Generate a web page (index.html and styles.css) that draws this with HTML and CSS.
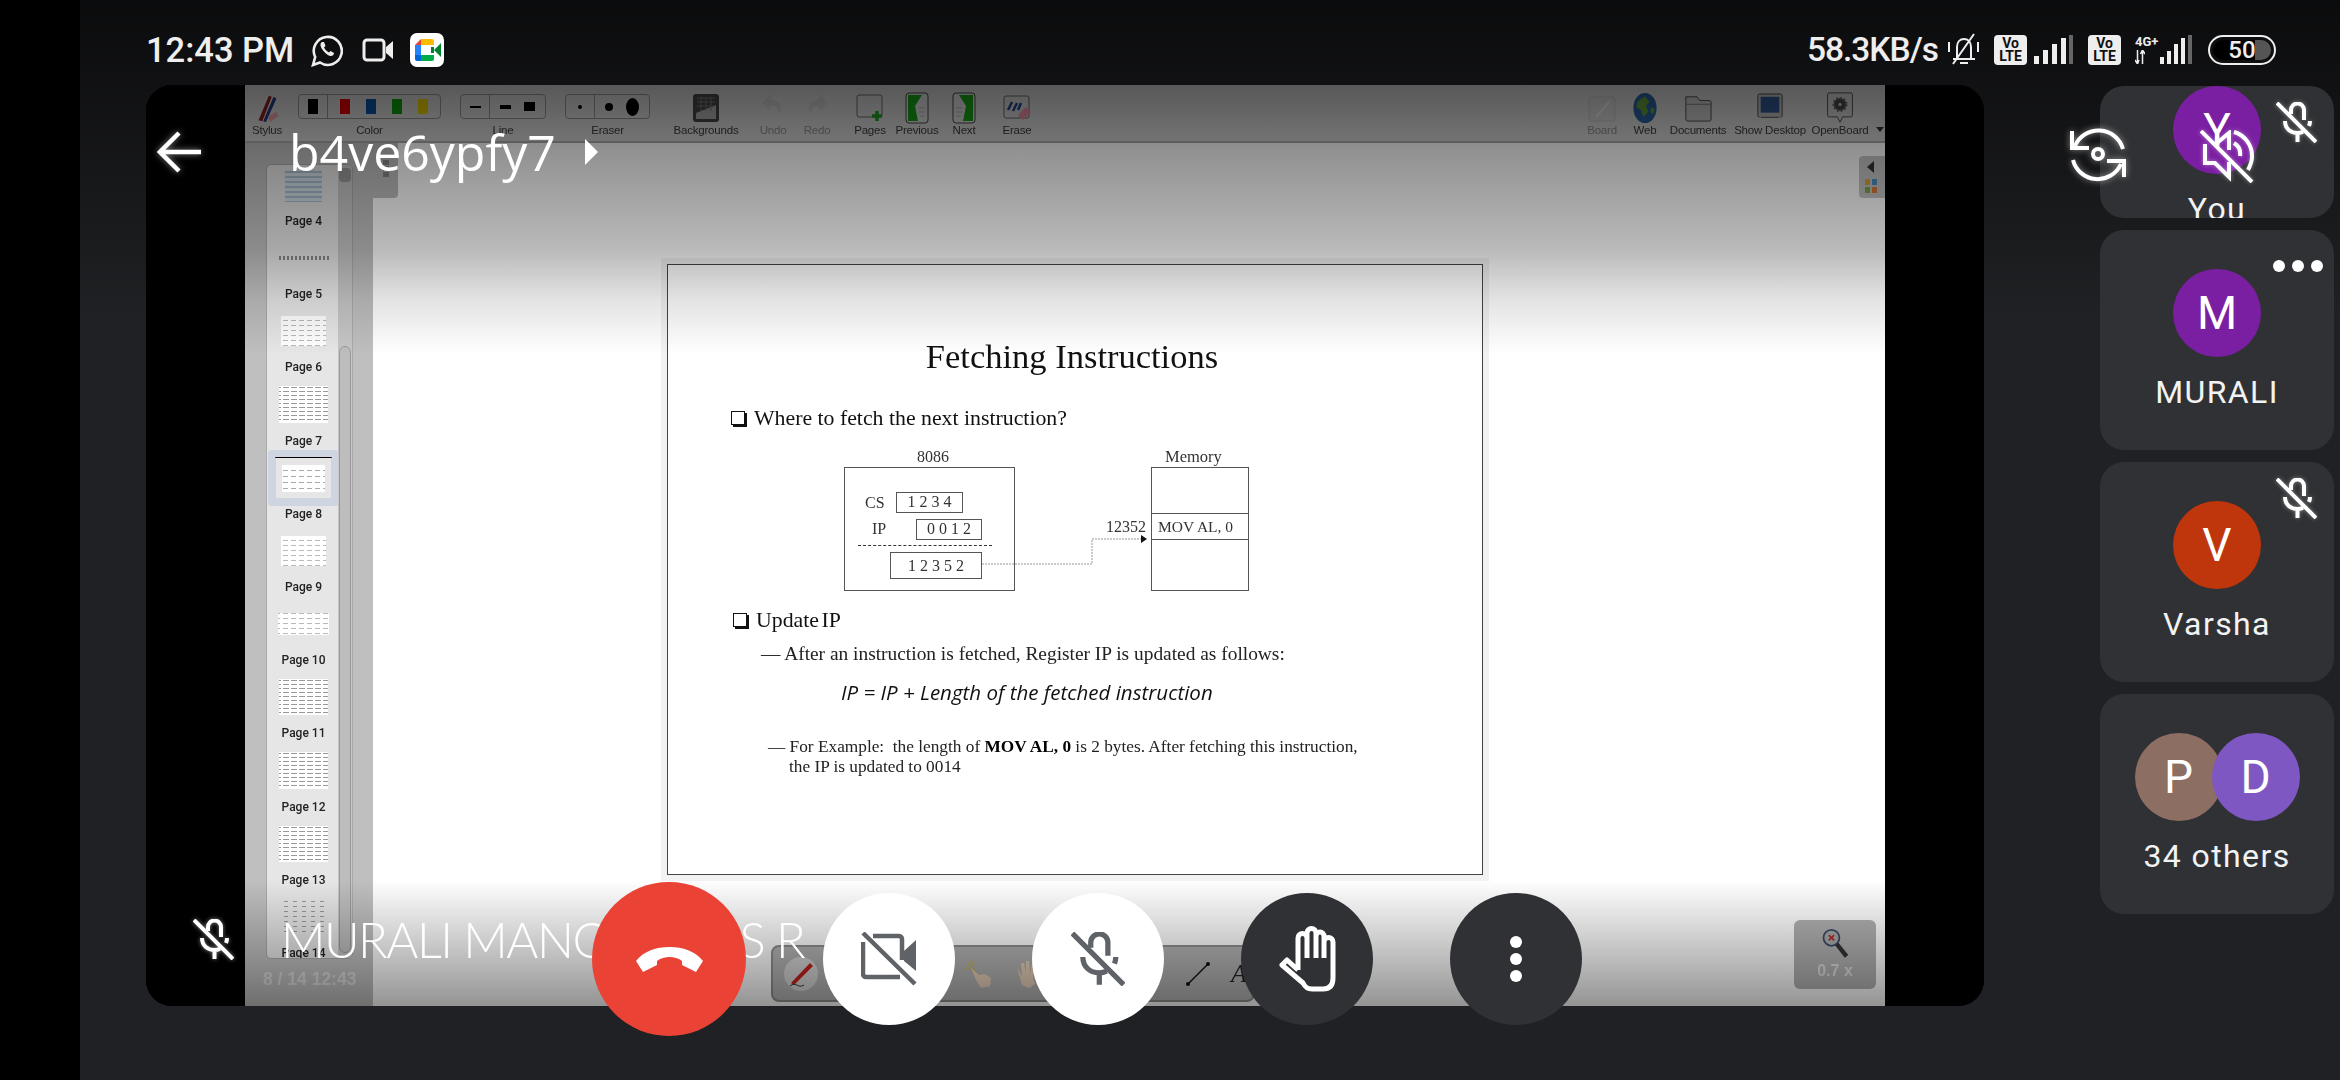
FILE: index.html
```html
<!DOCTYPE html>
<html lang="en">
<head>
    <meta charset="UTF-8">
    <title>Meet call</title>
    <link rel="stylesheet" href="styles.css">
</head>
<body>

<svg class="defs" width="0" height="0">
    <symbol id="mic-off" viewBox="0 0 41 41">
        <path d="M1 1L40 40M15 12V8a6.5 6.5 0 0 1 13 0V18M9 19c0 8 6 12 12.500 12c2 0 4-.5 5.500-1.300M34 19c0 2-.4 3.500-1 5M21.500 31V40" fill="none" stroke="currentColor" stroke-width="4"/>
    </symbol>
</svg>

<div class="screen">
    <div class="bezel"></div>

    <div class="app">
        <div class="statusbar">
            <span class="clock">12:43 PM</span>
            <svg class="st-whatsapp" viewBox="0 0 32 34"><path d="M2 32l2.200-8A14 14 0 1 1 9 29.500z" fill="none" stroke="#eee" stroke-width="2.600"/><path d="M11 9c-2 1-2 4 0 7s5 6 8 7c2 .5 4-1 4-3l-3.500-2-1.500 1.500c-2-1-4-3-5-5l1.500-1.500L13 9z" fill="#eee"/></svg>
            <svg class="st-camera" viewBox="0 0 31 24"><path d="M5 2H19a3 3 0 0 1 3 3V19a3 3 0 0 1-3 3H5a3 3 0 0 1-3-3V5a3 3 0 0 1 3-3z" fill="none" stroke="#eee" stroke-width="3"/><path d="M24 9l7-6V21l-7-6z" fill="#eee"/></svg>
            <svg class="st-meet" viewBox="0 0 34 34">
                <rect width="34" height="34" rx="7" fill="#fff"/>
                <path d="M5 12L11 6V12z" fill="#ea4335"/>
                <path d="M11 6H22a2 2 0 0 1 2 2V12H11z" fill="#fbbc04"/>
                <path d="M5 12H11V22H5z" fill="#2684fc"/>
                <path d="M5 22H11V28H7a2 2 0 0 1-2-2z" fill="#0066da"/>
                <path d="M11 22H24V26a2 2 0 0 1-2 2H11z" fill="#00ac47"/>
                <path d="M24 17L31 10V24zM21 14H24V20H21z" fill="#00832d"/>
            </svg>

            <span class="net-speed">58.3KB/s</span>
            <svg class="st-bell" viewBox="0 0 33 33"><path d="M10 26V14c0-5 3-8 7-8s7 3 7 8V26M6 26H28M13 30H21M27 1L6 31M2 9V19M31 9V19" fill="none" stroke="#eee" stroke-width="2"/></svg>
            <span class="volte"><span>Vo</span><span>LTE</span></span>
            <svg class="st-signal" viewBox="0 0 39 29"><path d="M0 21H5V29H0zM9 15H14V29H9zM18 9H23V29H18zM27 3H32V29H27z" fill="#eee"/><path d="M35 0H39V29H35z" fill="#666"/></svg>
            <span class="volte volte-two"><span>Vo</span><span>LTE</span></span>
            <span class="net-type">
                <span class="net-4g">4G+</span>
                <svg class="st-arrows" viewBox="0 0 10 14"><path d="M2.500 0V13M0 10L2.500 14L4 10M7.500 14V1M5.500 4L7.500 0L10 4" fill="none" stroke="#eee" stroke-width="1.500"/></svg>
            </span>
            <svg class="st-signal-two" viewBox="0 0 32 29"><path d="M0 22H4V29H0zM7 16H11V29H7zM14 9H18V29H14zM21 3H25V29H21z" fill="#eee"/><path d="M28 0H32V29H28z" fill="#666"/></svg>
            <span class="battery"><span class="battery-level"></span><span class="battery-num">50</span></span>
        </div>

        <div class="main">
            <div class="stage">
                <div class="pillar"></div>

                <div class="slide">
                    <div class="toolbar">
                        <div class="tool tool-stylus">
                            <svg class="tool-ico" viewBox="0 0 26 34"><path d="M4 30L15 4l3 1L8 31z" fill="#8c1c1c"/><path d="M9 31L20 5l3 2L12 32z" fill="#1c3a80"/><path d="M14 26l9-5 2 5-9 6z" fill="#e49aa8"/></svg>
                            <span class="tool-label">Stylus</span>
                        </div>
                        <div class="tool tool-color">
                            <div class="swatches">
                                <span class="cell cell-first"><i class="sw sw-black"></i></span>
                                <span class="cell"><i class="sw sw-red"></i><i class="sw sw-blue"></i><i class="sw sw-green"></i><i class="sw sw-yellow"></i></span>
                            </div>
                            <span class="tool-label">Color</span>
                        </div>
                        <div class="tool tool-line">
                            <div class="swatches">
                                <span class="cell cell-first"><i class="ln ln-1"></i></span>
                                <span class="cell"><i class="ln ln-2"></i><i class="ln ln-3"></i></span>
                            </div>
                            <span class="tool-label">Line</span>
                        </div>
                        <div class="tool tool-eraser">
                            <div class="swatches">
                                <span class="cell cell-first"><i class="dot dot-1"></i></span>
                                <span class="cell"><i class="dot dot-2"></i><i class="dot dot-3"></i></span>
                            </div>
                            <span class="tool-label">Eraser</span>
                        </div>
                        <div class="tool tool-bg">
                            <svg class="tool-ico" viewBox="0 0 28 30"><rect x="1" y="1" width="26" height="28" rx="3" fill="#444"/><path d="M4 20L24 12V26H4z" fill="#aaa"/><path d="M5 5H23M5 9H23M5 13H23M9 4V18M14 4V18M19 4V18" stroke="#777"/></svg>
                            <span class="tool-label">Backgrounds</span>
                        </div>
                        <div class="tool tool-undo tool-off">
                            <svg class="tool-ico" viewBox="0 0 24 30"><path d="M10 2L2 10l8 8v-5c5 0 8 3 7 9 5-7 3-14-7-15z" fill="#bbb"/></svg>
                            <span class="tool-label">Undo</span>
                        </div>
                        <div class="tool tool-redo tool-off">
                            <svg class="tool-ico" viewBox="0 0 24 30"><path d="M14 2l8 8-8 8v-5c-5 0-8 3-7 9C2 15 4 8 14 7z" fill="#bbb"/></svg>
                            <span class="tool-label">Redo</span>
                        </div>
                        <div class="tool tool-pages">
                            <svg class="tool-ico" viewBox="0 0 28 32"><rect x="1" y="3" width="25" height="22" rx="2" fill="#d0d0d0" stroke="#666"/><path d="M21 19v10M16 24h10" stroke="#1f9a1f" stroke-width="3.500"/></svg>
                            <span class="tool-label">Pages</span>
                        </div>
                        <div class="tool tool-prev">
                            <svg class="tool-ico" viewBox="0 0 24 32"><rect x="1" y="1" width="22" height="30" rx="3" fill="#d8d8d8" stroke="#444"/><path d="M3 3H17L10 14l3 15H3z" fill="#17a017"/><path d="M14 16H20M14 20H20M15 24H20" stroke="#aaa"/></svg>
                            <span class="tool-label">Previous</span>
                        </div>
                        <div class="tool tool-next">
                            <svg class="tool-ico" viewBox="0 0 24 32"><rect x="1" y="1" width="22" height="30" rx="3" fill="#d8d8d8" stroke="#444"/><path d="M21 3H7L14 14l-3 15h10z" fill="#17a017"/><path d="M4 16H10M4 20H10M4 24H9" stroke="#aaa"/></svg>
                            <span class="tool-label">Next</span>
                        </div>
                        <div class="tool tool-erase">
                            <svg class="tool-ico" viewBox="0 0 28 30"><rect x="1" y="3" width="25" height="22" rx="2" fill="#d0d0d0" stroke="#666"/><path d="M5 17L9 9M10 18L14 10M15 17L18 10" stroke="#27408b" stroke-width="2.500"/><path d="M15 22l8-8 5 5-8 8z" fill="#e88aa0"/></svg>
                            <span class="tool-label">Erase</span>
                        </div>

                        <div class="tool tool-board tool-off">
                            <svg class="tool-ico" viewBox="0 0 28 30"><rect x="1" y="4" width="26" height="24" rx="2" fill="#ccc" stroke="#aaa"/><path d="M8 24L22 8" stroke="#eee" stroke-width="2"/></svg>
                            <span class="tool-label">Board</span>
                        </div>
                        <div class="tool tool-web">
                            <svg class="tool-ico" viewBox="0 0 28 36"><ellipse cx="14" cy="18" rx="13" ry="17" fill="#2a5d9c"/><path d="M6 10l8-5 5 6-4 5 3 6-6 6-3-8-5-3zM21 17l4 2-2 6-3-2z" fill="#5f9a3a"/></svg>
                            <span class="tool-label">Web</span>
                        </div>
                        <div class="tool tool-docs">
                            <svg class="tool-ico" viewBox="0 0 30 32"><path d="M2 4H14l3 4H27a2 2 0 0 1 2 2V28a2 2 0 0 1-2 2H4a2 2 0 0 1-2-2z" fill="#c4c4c4" stroke="#444"/><path d="M2 12H29" stroke="#777"/></svg>
                            <span class="tool-label">Documents</span>
                        </div>
                        <div class="tool tool-desktop">
                            <svg class="tool-ico" viewBox="0 0 30 32"><rect x="2" y="1" width="26" height="25" rx="2" fill="#bbb" stroke="#444"/><rect x="5" y="4" width="20" height="17" fill="#31558f"/><path d="M5 26L2 31M25 26L28 31" stroke="#ccc" stroke-width="2"/></svg>
                            <span class="tool-label">Show Desktop</span>
                        </div>
                        <div class="tool tool-ob">
                            <svg class="tool-ico" viewBox="0 0 30 36"><path d="M3 1H27a2 2 0 0 1 2 2V26a2 2 0 0 1-2 2H18l-3 6-3-6H3a2 2 0 0 1-2-2V3a2 2 0 0 1 2-2z" fill="#ccc" stroke="#444"/><circle cx="15" cy="14" r="7" fill="#444" stroke="#666" stroke-width="3" stroke-dasharray="2 2"/><circle cx="15" cy="14" r="2" fill="#bbb"/></svg>
                            <span class="tool-label">OpenBoard</span>
                        </div>
                        <span class="tool-more"></span>
                    </div>

                    <div class="workspace">
                        <div class="side">
                            <div class="pages-box">
                                <div class="pages-list">
                                    <div class="thumb thumb-first thumb-blue"></div>
                                    <div class="page-name">Page 4</div>
                                    <div class="thumb thumb-sparse"></div>
                                    <div class="page-name">Page 5</div>
                                    <div class="thumb thumb-chart"></div>
                                    <div class="page-name">Page 6</div>
                                    <div class="thumb thumb-text"></div>
                                    <div class="page-name">Page 7</div>
                                    <div class="thumb thumb-current"></div>
                                    <div class="page-name">Page 8</div>
                                    <div class="thumb thumb-chart"></div>
                                    <div class="page-name">Page 9</div>
                                    <div class="thumb thumb-chart thumb-chart-wide"></div>
                                    <div class="page-name">Page 10</div>
                                    <div class="thumb thumb-text"></div>
                                    <div class="page-name">Page 11</div>
                                    <div class="thumb thumb-text"></div>
                                    <div class="page-name">Page 12</div>
                                    <div class="thumb thumb-text"></div>
                                    <div class="page-name">Page 13</div>
                                    <div class="thumb thumb-text thumb-table"></div>
                                    <div class="page-name">Page 14</div>
                                </div>
                                <div class="rail">
                                    <span class="rail-btn"></span>
                                    <span class="rail-thumb"></span>
                                </div>
                            </div>
                            <div class="page-count">8 / 14 12:43</div>
                        </div>

                        <div class="board">
                            <div class="tab-left"><i></i><i></i><i></i></div>
                            <div class="tab-right">
                                <svg class="tab-ico" viewBox="0 0 16 36"><path d="M11 2L4 8l7 6z" fill="#333"/><rect x="2" y="20" width="5" height="6" fill="#d8a43a"/><rect x="9" y="20" width="5" height="6" fill="#4a90c2"/><rect x="2" y="28" width="5" height="6" fill="#7ea84a"/><rect x="9" y="28" width="5" height="6" fill="#d87a3a"/></svg>
                            </div>

                            <div class="page">
                                <h1 class="page-title">Fetching Instructions</h1>
                                <p class="point point-where"><span class="bullet"></span>Where to fetch the next instruction?</p>

                                <div class="diagram">
                                    <span class="dg-cap dg-cap-cpu">8086</span>
                                    <span class="dg-cap dg-cap-mem">Memory</span>
                                    <div class="dg-box dg-cpu"></div>
                                    <span class="dg-text dg-cs">CS</span>
                                    <div class="dg-box dg-reg dg-reg-cs">1 2 3 4</div>
                                    <span class="dg-text dg-ip">IP</span>
                                    <div class="dg-box dg-reg dg-reg-ip">0 0 1 2</div>
                                    <div class="dg-dash"></div>
                                    <div class="dg-box dg-reg dg-reg-sum">1 2 3 5 2</div>
                                    <svg class="dg-link" viewBox="0 0 170 30"><path d="M0 26H110V1H160" fill="none" stroke="#bbb" stroke-width="1.500" stroke-dasharray="2 1"/><path d="M159 -3L165 1L159 5z" fill="#111"/></svg>
                                    <span class="dg-text dg-addr">12352</span>
                                    <div class="dg-box dg-mem"><div class="dg-slot">MOV AL, 0</div></div>
                                </div>

                                <p class="point point-update"><span class="bullet"></span>Update IP</p>
                                <p class="sub sub-after">&mdash; After an instruction is fetched, Register IP is updated as follows:</p>
                                <p class="formula">IP = IP + Length of the fetched instruction</p>
                                <p class="sub sub-example">&mdash; For Example: &nbsp;the length of <b>MOV AL, 0</b> is 2 bytes. After fetching this instruction,<br>the IP is updated to 0014</p>
                            </div>

                            <div class="dock">
                                <svg class="dock-pen" viewBox="0 0 34 34"><circle cx="17" cy="17" r="17" fill="#d4d4d4"/><path d="M7 26L26 6l3 3L10 28z" fill="#c4201c"/><path d="M6 29c6-5 8 3 14-1" fill="none" stroke="#333"/></svg>
                                <svg class="dock-point" viewBox="0 0 30 28"><path d="M4 3L12 11M2 8L7 9M9 1L10 5" stroke="#c8b450" stroke-width="1.500"/><path d="M8 8L16 15l6-1 6 4-1 8-9 2-5-8z" fill="#e6d0b8"/></svg>
                                <svg class="dock-hand" viewBox="0 0 24 28"><path d="M2 8l5 8-1-13 3 0 2 10V1h3l1 12 2-9 3 1-2 12 2 7-6 4-7-3z" fill="#e6d0b8"/></svg>
                                <svg class="dock-line" viewBox="0 0 24 24"><path d="M2 22L22 2" stroke="#111" stroke-width="1.500"/><circle cx="2" cy="22" r="2" fill="#111"/><circle cx="22" cy="2" r="2" fill="#111"/></svg>
                                <span class="dock-a">A</span>
                            </div>

                            <div class="zoom-box">
                                <svg class="zoom-ico" viewBox="0 0 30 36"><circle cx="11" cy="11" r="9" fill="#aaa" stroke="#3b4a66" stroke-width="2"/><path d="M8 8l6 6M14 8l-6 6" stroke="#b03030" stroke-width="2"/><path d="M17 18L28 32" stroke="#333" stroke-width="5"/></svg>
                                <span class="zoom-num">0.7 x</span>
                            </div>
                        </div>
                    </div>
                </div>

                <div class="pillar"></div>

                <div class="shade-top"></div>
                <div class="shade-bottom"></div>

                <div class="stage-head">
                    <svg class="ico-back" viewBox="0 0 44 42"><path d="M22 2L3 21L22 40M3 21H44" fill="none" stroke="#fff" stroke-width="4.500"/></svg>
                    <span class="room-code">b4ve6ypfy7</span>
                    <span class="room-arrow"></span>
                </div>

                <div class="stage-name">
                    <svg class="ico-mic"><use href="#mic-off"/></svg>
                    <span class="speaker">MURALI MANOHAR &nbsp; S R</span>
                </div>
            </div>

            <div class="sidebar">
                <svg class="ico-flip" viewBox="0 0 56 55"><path d="M2 4V21H19M5 19A25.500 25.500 0 0 1 53 22M54 50V34H37M51 37A25.500 25.500 0 0 1 3 33" fill="none" stroke="#fff" stroke-width="4"/><circle cx="28" cy="27" r="5" fill="none" stroke="#fff" stroke-width="4"/></svg>

                <div class="tile tile-you">
                    <div class="avatar av-purple">Y</div>
                    <div class="tile-name">You</div>
                    <svg class="ico-tile-mic"><use href="#mic-off"/></svg>
                    <svg class="ico-speaker" viewBox="0 0 55 53"><path d="M1 1L52 52M5 14V33H15L29 47V32M17 13L29 3V20M34 13A13 13 0 0 1 40 26M34 2A25 25 0 0 1 52 27C52 32 50 36 48 40" fill="none" stroke="#fff" stroke-width="4"/></svg>
                </div>

                <div class="tile">
                    <div class="avatar av-purple">M</div>
                    <div class="tile-name">MURALI</div>
                    <div class="tile-dots"><i></i><i></i><i></i></div>
                </div>

                <div class="tile">
                    <div class="avatar av-red">V</div>
                    <div class="tile-name">Varsha</div>
                    <svg class="ico-tile-mic"><use href="#mic-off"/></svg>
                </div>

                <div class="tile">
                    <div class="avatar-pair">
                        <div class="avatar av-brown">P</div>
                        <div class="avatar av-violet">D</div>
                    </div>
                    <div class="tile-name">34 others</div>
                </div>
            </div>
        </div>
    </div>

    <div class="controls">
        <button class="ctl ctl-end">
            <svg class="ico-end" viewBox="0 0 67 25"><path d="M0 14C8 4 20 0 33.500 0S59 4 67 14L60 25L46 18V14C42 11 38 10 33.500 10S25 11 21 14V18L7 25Z" fill="#fff"/></svg>
        </button>
        <button class="ctl ctl-light">
            <svg class="ico-video" viewBox="0 0 56 54"><path d="M12 4H38a3 3 0 0 1 3 3V28M2 10V42a3 3 0 0 0 3 3H39M2 1L54 52" fill="none" stroke="#5f6368" stroke-width="4.500"/><path d="M43 19L55 8V39L43 29Z" fill="#5f6368"/></svg>
        </button>
        <button class="ctl ctl-light">
            <svg class="ico-ctl-mic"><use href="#mic-off"/></svg>
        </button>
        <button class="ctl ctl-dark">
            <svg class="ico-hand" viewBox="0 0 57 66"><path d="M19 44V12a4.500 4.500 0 0 1 9 0V7a4.500 4.500 0 0 1 9 0V10a4 4 0 0 1 8 0V16a4.500 4.500 0 0 1 9 0V52C54 60 50 63 44 63H33C28 63 26 61 24 57L3 39L8 34L19 44M28 12V32M37 7V32M45 10V32" fill="none" stroke="#fff" stroke-width="5" stroke-linejoin="round"/></svg>
        </button>
        <button class="ctl ctl-dark ctl-more"><i></i><i></i><i></i></button>
    </div>
</div>

</body>
</html>
```

FILE: styles.css
```css
* {
    box-sizing: border-box;
}

body {
    margin: 0;
    background: #000;
    font-family: Roboto, "Liberation Sans", sans-serif;
}

.defs {
    position: absolute;
}

.screen {
    position: relative;
    display: flex;
    width: 2340px;
    height: 1080px;
    overflow: hidden;
    background: #202124;
}

/* page wide fade behind the status bar */
.screen::before {
    content: "";
    position: absolute;
    left: 0;
    top: 0;
    width: 100%;
    height: 320px;
    background: linear-gradient(rgba(0, 0, 0, 0.66), rgba(0, 0, 0, 0));
}

.bezel {
    position: relative;
    z-index: 1;
    width: 80px;
    background: #000;
}

.app {
    display: flex;
    flex-direction: column;
    flex: 1;
}

/* status bar */
.statusbar {
    position: relative;
    z-index: 1;
    display: flex;
    align-items: center;
    height: 85px;
    padding: 14px 64px 0 66px;
    color: #eee;
}

.clock {
    font-size: 34.500px;
    font-weight: 500;
}

.st-whatsapp {
    width: 32px;
    height: 34px;
    margin-left: 17px;
}

.st-camera {
    width: 31px;
    height: 24px;
    margin-left: 19px;
}

.st-meet {
    width: 34px;
    height: 34px;
    margin-left: 17px;
}

.net-speed {
    margin-left: auto;
    font-size: 33.500px;
    font-weight: 500;
    letter-spacing: -1px;
}

.st-bell {
    width: 33px;
    height: 33px;
    margin-left: 9px;
}

.volte {
    display: flex;
    flex-direction: column;
    align-items: center;
    justify-content: center;
    width: 33px;
    height: 30px;
    margin-left: 14px;
    border-radius: 4px;
    background: #eee;
    color: #111;
    font-size: 14px;
    font-weight: 700;
    line-height: 13px;
}

.volte-two {
    margin-left: 15px;
}

.st-signal {
    width: 39px;
    height: 29px;
    margin-left: 7px;
}

.net-type {
    display: flex;
    flex-direction: column;
    width: 29px;
    height: 29px;
    margin-left: 14px;
}

.net-4g {
    font-size: 13px;
    font-weight: 700;
    line-height: 14px;
}

.st-arrows {
    width: 10px;
    height: 14px;
    margin-top: 1px;
}

.st-signal-two {
    width: 32px;
    height: 29px;
    margin-left: -4px;
}

.battery {
    position: relative;
    display: flex;
    align-items: center;
    justify-content: center;
    width: 68px;
    height: 30px;
    margin-left: 16px;
    padding: 3px;
    border: 2.500px solid #eee;
    border-radius: 15px;
}

.battery-level {
    position: absolute;
    left: 3px;
    top: 3px;
    bottom: 3px;
    right: 3px;
    border-radius: 10px;
    background: linear-gradient(90deg, #000 72%, #555 72%);
}

.battery-num {
    position: relative;
    font-size: 24px;
    font-weight: 500;
}

/* main row */
.main {
    display: flex;
    flex: 1;
}

.stage {
    position: relative;
    z-index: 1;
    display: flex;
    width: 1838px;
    height: 921px;
    margin-left: 66px;
    border-radius: 26px;
    overflow: hidden;
    background: #000;
}

.pillar {
    width: 99px;
    background: #000;
}

.slide {
    display: flex;
    flex-direction: column;
    flex: 1;
    min-width: 0;
    background: #fff;
    filter: blur(0.5px);
}

.shade-top {
    position: absolute;
    left: 0;
    top: 0;
    width: 100%;
    height: 270px;
    background: linear-gradient(rgba(0, 0, 0, 0.58), rgba(0, 0, 0, 0.43) 65px, rgba(0, 0, 0, 0.27) 165px, rgba(0, 0, 0, 0.11) 215px, rgba(0, 0, 0, 0));
}

.shade-bottom {
    position: absolute;
    left: 0;
    bottom: 0;
    width: 100%;
    height: 126px;
    background: linear-gradient(rgba(0, 0, 0, 0), rgba(0, 0, 0, 0.42));
}

/* openboard tools */
.toolbar {
    display: flex;
    flex: none;
    height: 58px;
    background: #d2d2d2;
    border-bottom: 2px solid #aaa;
}

.tool {
    display: flex;
    flex-direction: column;
    align-items: center;
    flex: none;
    padding-top: 7px;
}

.tool-ico {
    width: 28px;
    height: 32px;
}

.tool-label {
    position: absolute;
    top: 37px;
    color: #3a3a3a;
    font-family: "Liberation Sans", sans-serif;
    font-size: 11.500px;
    line-height: 16px;
    letter-spacing: -0.2px;
    white-space: nowrap;
}

.tool-off .tool-ico {
    opacity: 0.55;
}

.tool-off .tool-label {
    color: #8a8a8a;
}

.tool-stylus { width: 44px; }
.tool-color { width: 143px; margin-left: 9px; padding-top: 9px; }
.tool-line { width: 86px; margin-left: 19px; padding-top: 9px; }
.tool-eraser { width: 85px; margin-left: 19px; padding-top: 9px; }
.tool-bg { width: 62px; margin-left: 25px; }
.tool-undo { width: 40px; margin-left: 16px; }
.tool-redo { width: 40px; margin-left: 4px; }
.tool-pages { width: 40px; margin-left: 13px; }
.tool-prev { width: 54px; }
.tool-next { width: 40px; }
.tool-erase { width: 40px; margin-left: 13px; }
.tool-board { width: 36px; margin-left: auto; }
.tool-web { width: 36px; margin-left: 7px; }
.tool-docs { width: 60px; margin-left: 5px; }
.tool-desktop { width: 70px; margin-left: 7px; }
.tool-ob { width: 70px; }

.tool-more {
    align-self: flex-end;
    width: 0;
    height: 0;
    margin: 0 1px 9px 1px;
    border: 4px solid transparent;
    border-top: 5px solid #333;
    border-bottom: 0;
}

.swatches {
    display: flex;
    width: 100%;
    height: 25px;
    border: 1px solid #8e8e8e;
    border-radius: 4px;
}

.cell {
    display: flex;
    align-items: center;
    justify-content: space-around;
    flex: 1;
    padding: 0 4px;
}

.cell-first {
    flex: none;
    width: 29px;
    padding: 0;
    border-right: 1px solid #8e8e8e;
}

.sw {
    width: 10px;
    height: 15px;
}

.sw-black { background: #000; }
.sw-red { background: #e00000; }
.sw-blue { background: #0b4f9e; }
.sw-green { background: #0b9a0b; }
.sw-yellow { background: #e3c800; }

.ln {
    width: 11px;
    background: #000;
}

.ln-1 { height: 2px; }
.ln-2 { height: 4px; }
.ln-3 { height: 9px; }

.dot {
    border-radius: 50%;
    background: #000;
}

.dot-1 { width: 4px; height: 4px; }
.dot-2 { width: 8px; height: 8px; }
.dot-3 { width: 13px; height: 18px; }

.workspace {
    display: flex;
    flex: 1;
    min-height: 0;
}

/* page thumbnails */
.side {
    display: flex;
    flex-direction: column;
    flex: none;
    width: 128px;
    padding: 21px 20px 0 21px;
    background: #bfbfbf;
}

.pages-box {
    display: flex;
    flex: none;
    height: 795px;
    border: 1px solid #aaa;
    border-radius: 5px;
    background: #e6e6e6;
    overflow: hidden;
}

.pages-list {
    display: flex;
    flex-direction: column;
    align-items: center;
    flex: 1;
    padding: 1px 0 0 2px;
}

.page-name {
    flex: none;
    height: 31px;
    color: #222;
    font-family: Roboto, sans-serif;
    font-size: 12px;
    font-weight: 500;
    line-height: 31px;
}

/* small slide previews: fake lines of text, broken into words by the top layer */
.thumb {
    flex: none;
    width: 57px;
    height: 42.200px;
    padding: 4px 5px;
    background-color: #fff;
    background-image: repeating-linear-gradient(90deg, transparent 0, transparent 6px, #fff 6px, #fff 8px), repeating-linear-gradient(#999 0, #999 1px, transparent 1px, transparent 4px);
    background-clip: content-box;
}

.thumb-first {
    height: 40px;
    background-color: #dcdcdc;
}

.thumb-blue {
    padding: 4px 10px;
    background-image: repeating-linear-gradient(#a9bccd 0, #a9bccd 2px, #d5e0e8 2px, #d5e0e8 5px);
}

.thumb-sparse {
    padding: 19px 3px;
    background-color: #e6e6e6;
    background-image: repeating-linear-gradient(90deg, #888 0, #888 2px, transparent 2px, transparent 4px);
}

.thumb-chart {
    padding: 6px 6px;
    background-image: linear-gradient(90deg, #888 0, #888 1px, transparent 1px), linear-gradient(#888 0, #888 1px, transparent 1px), repeating-linear-gradient(90deg, transparent 0, transparent 5px, #fff 5px, #fff 8px), repeating-linear-gradient(#bbb 0, #bbb 1px, transparent 1px, transparent 5px);
}

.thumb-chart-wide {
    padding: 10px 3px;
}

.thumb-text {
    padding: 3px 4px;
}

.thumb-table {
    background-color: #e6e6e6;
    background-image: repeating-linear-gradient(90deg, transparent 0, transparent 4px, #e6e6e6 4px, #e6e6e6 9px), repeating-linear-gradient(#999 0, #999 1px, transparent 1px, transparent 5px);
}

.thumb-current {
    border-top: 1px solid #000;
    padding: 7px 7px;
    box-shadow: 0 0 0 7px #cfd5e0;
    border-radius: 1px;
    background-image: repeating-linear-gradient(90deg, transparent 0, transparent 5px, #fff 5px, #fff 8px), repeating-linear-gradient(#aaa 0, #aaa 1px, transparent 1px, transparent 6px);
}

.rail {
    display: flex;
    flex-direction: column;
    flex: none;
    width: 14px;
    padding: 3px 1px;
    background: #c6c6c6;
}

.rail-btn {
    height: 14px;
    border-radius: 4px;
    background: #9a9a9a;
}

.rail-thumb {
    height: 607px;
    margin-top: 164px;
    border: 1px solid #9a9a9a;
    border-radius: 6px;
    background: #bdbdbd;
}

.page-count {
    margin: 10px 0 0 -3px;
    color: #dcdcdc;
    font-family: "Liberation Sans", sans-serif;
    font-size: 17.500px;
    font-weight: 700;
    line-height: 20px;
    white-space: nowrap;
}

/* white board */
.board {
    position: relative;
    flex: 1;
    background: #fff;
}

.tab-left {
    position: absolute;
    left: 0;
    top: 0;
    display: flex;
    flex-direction: column;
    align-items: center;
    gap: 1px;
    width: 25px;
    height: 55px;
    padding-top: 17px;
    background: #bfbfbf;
    border-radius: 0 0 4px 0;
}

.tab-left i {
    width: 6px;
    height: 5px;
    background: #888;
}

.tab-right {
    position: absolute;
    right: 0;
    top: 13px;
    width: 26px;
    height: 42px;
    padding: 3px 4px;
    background: #c6c6c6;
    border-radius: 4px 0 0 4px;
}

.tab-ico {
    display: block;
    width: 16px;
    height: 36px;
}

.page {
    position: relative;
    width: 816px;
    height: 611px;
    margin: 121px 0 0 294px;
    padding-top: 71px;
    border: 1px solid #444;
    box-shadow: 0 0 0 6px #f2f2f2;
    background: #fff;
    color: #111;
    font-family: "Liberation Serif", serif;
}

.page-title {
    margin: 0 0 0 -6px;
    font-size: 34.500px;
    font-weight: 400;
    line-height: 40px;
    text-align: center;
}

.page p {
    margin: 0;
    white-space: nowrap;
}

.point {
    font-size: 21.800px;
    line-height: 26px;
}

.point-where {
    margin-top: 29px !important;
    padding-left: 63px;
}

.point-update {
    margin-top: 16px !important;
    padding-left: 65px;
    word-spacing: -3px;
}

.bullet {
    display: inline-block;
    width: 14px;
    height: 14px;
    margin-right: 9px;
    border: 1px solid #111;
    box-shadow: 2px 2px 0 #111;
}

.diagram {
    position: relative;
    height: 151px;
    margin-top: 9px;
    font-size: 16px;
    line-height: 18px;
}

.dg-cap,
.dg-text {
    position: absolute;
    color: #333;
}

.dg-cap-cpu { left: 249px; top: 8px; }
.dg-cap-mem { left: 497px; top: 8px; font-size: 16.500px; }
.dg-cs { left: 197px; top: 54px; }
.dg-ip { left: 204px; top: 80px; }
.dg-addr { left: 438px; top: 78px; }

.dg-box {
    position: absolute;
    border: 1px solid #555;
}

.dg-cpu {
    left: 176px;
    top: 27px;
    width: 171px;
    height: 124px;
}

.dg-reg {
    color: #333;
    text-align: center;
}

.dg-reg-cs {
    left: 228px;
    top: 52px;
    width: 67px;
    height: 21px;
}

.dg-reg-ip {
    left: 248px;
    top: 79px;
    width: 66px;
    height: 21px;
}

.dg-reg-sum {
    left: 222px;
    top: 112px;
    width: 92px;
    height: 27px;
    line-height: 26px;
}

.dg-dash {
    position: absolute;
    left: 190px;
    top: 105px;
    width: 134px;
    border-top: 1px dashed #333;
}

.dg-link {
    position: absolute;
    left: 314px;
    top: 98px;
    width: 170px;
    height: 30px;
    overflow: visible;
}

.dg-mem {
    left: 483px;
    top: 27px;
    width: 98px;
    height: 124px;
}

.dg-slot {
    height: 27px;
    margin-top: 45px;
    padding-left: 6px;
    border-top: 1px solid #555;
    border-bottom: 1px solid #555;
    color: #333;
    font-size: 15.500px;
    line-height: 25px;
    white-space: nowrap;
}

.sub {
    color: #222;
}

.sub-after {
    margin-top: 10px !important;
    padding-left: 93px;
    font-size: 19.400px;
    line-height: 22px;
}

.formula {
    margin-top: 15px !important;
    padding-left: 173px;
    font-family: "Open Sans", sans-serif;
    font-size: 20.500px;
    font-style: italic;
    line-height: 24px;
}

.sub-example {
    margin-top: 33px !important;
    padding-left: 121px;
    text-indent: -21px;
    font-size: 17.300px;
    line-height: 20px;
}

.sub-example b {
    color: #000;
}

/* bottom dock, mostly covered by the call buttons */
.dock {
    position: absolute;
    left: 398px;
    top: 802px;
    display: flex;
    align-items: center;
    width: 484px;
    height: 57px;
    padding-left: 11px;
    border: 2px solid #8e8e8e;
    border-radius: 8px;
    background: #b4b4b4;
}

.dock-pen {
    width: 34px;
    height: 34px;
}

.dock-point {
    width: 30px;
    height: 28px;
    margin-left: 145px;
}

.dock-hand {
    width: 24px;
    height: 28px;
    margin-left: 22px;
}

.dock-line {
    width: 24px;
    height: 24px;
    margin-left: 147px;
}

.dock-a {
    margin-left: 21px;
    color: #222;
    font-family: "Liberation Serif", serif;
    font-size: 26px;
    font-style: italic;
}

.zoom-box {
    position: absolute;
    left: 1421px;
    top: 777px;
    display: flex;
    flex-direction: column;
    align-items: center;
    width: 82px;
    height: 69px;
    padding-top: 8px;
    border-radius: 6px;
    background: #b2b2b2;
}

.zoom-ico {
    width: 30px;
    height: 32px;
}

.zoom-num {
    margin-top: 2px;
    color: #dedede;
    font-family: "Liberation Sans", sans-serif;
    font-size: 16px;
    font-weight: 700;
}

/* meet overlays on the stage */
.stage-head {
    position: absolute;
    left: 11px;
    top: 45px;
    display: flex;
    align-items: center;
    color: #fff;
}

.ico-back {
    width: 44px;
    height: 42px;
    filter: drop-shadow(0 0 3px rgba(255, 255, 255, 0.5));
}

.room-code {
    margin-left: 88px;
    font-family: "Open Sans", sans-serif;
    font-size: 50px;
    line-height: 44px;
}

.room-arrow {
    width: 0;
    height: 0;
    margin-left: 29px;
    border-top: 13px solid transparent;
    border-bottom: 13px solid transparent;
    border-left: 13px solid #fff;
}

.stage-name {
    position: absolute;
    left: 47px;
    top: 832px;
    display: flex;
    align-items: center;
    color: #fff;
}

.ico-mic {
    width: 41px;
    height: 41px;
    filter: drop-shadow(0 0 2px rgba(255, 255, 255, 0.5));
}

.speaker {
    margin-left: 47px;
    font-family: Lato, sans-serif;
    font-size: 49px;
    font-weight: 300;
    line-height: 44px;
    letter-spacing: -1.500px;
    white-space: nowrap;
}

/* participant tiles */
.sidebar {
    position: relative;
    display: flex;
    flex-direction: column;
    gap: 12px;
    width: 234px;
    margin-left: 116px;
    padding-top: 1px;
}

.tile {
    position: relative;
    display: flex;
    flex-direction: column;
    align-items: center;
    flex: none;
    height: 220px;
    padding-top: 39px;
    border-radius: 24px;
    background: #303134;
    color: #fff;
}

.tile-you {
    height: 132px;
    padding-top: 0;
    overflow: hidden;
}

.avatar {
    position: relative;
    z-index: 1;
    display: flex;
    align-items: center;
    justify-content: center;
    flex: none;
    width: 88px;
    height: 88px;
    border-radius: 50%;
    color: #fff;
    font-size: 46px;
}

.av-purple { background: #7b1fa2; }
.av-red { background: #bf360c; }
.av-brown { background: #8d6e63; }
.av-violet { background: #7e57c2; margin-left: -11px; }

.avatar-pair {
    display: flex;
}

.tile-name {
    position: relative;
    z-index: 1;
    margin-top: 17px;
    color: #f1f3f4;
    font-size: 32px;
    line-height: 36px;
    letter-spacing: 1.400px;
    white-space: nowrap;
}

.ico-tile-mic {
    position: absolute;
    z-index: 2;
    right: 17px;
    top: 16px;
    width: 41px;
    height: 41px;
    color: #fff;
    filter: drop-shadow(0 0 2px rgba(255, 255, 255, 0.4));
}

.ico-speaker {
    position: absolute;
    z-index: 2;
    left: 100px;
    top: 44px;
    width: 55px;
    height: 53px;
    filter: drop-shadow(0 0 2px rgba(255, 255, 255, 0.4));
}

.ico-flip {
    position: absolute;
    z-index: 2;
    left: -30px;
    top: 42px;
    width: 56px;
    height: 55px;
    overflow: visible;
    filter: drop-shadow(0 0 3px rgba(255, 255, 255, 0.5));
}

.tile-dots {
    position: absolute;
    z-index: 2;
    right: 11px;
    top: 30px;
    display: flex;
    gap: 7px;
}

.tile-dots i {
    width: 12px;
    height: 12px;
    border-radius: 50%;
    background: #fff;
}

/* call buttons */
.controls {
    position: absolute;
    z-index: 3;
    left: 592px;
    top: 882px;
    display: flex;
    align-items: center;
    gap: 77px;
    height: 154px;
}

.ctl {
    display: flex;
    align-items: center;
    justify-content: center;
    flex: none;
    width: 132px;
    height: 132px;
    padding: 0;
    border: 0;
    border-radius: 50%;
}

.ctl-end {
    width: 154px;
    height: 154px;
    background: #ea4335;
}

.ctl-light {
    background: #fff;
    color: #5f6368;
}

.ctl-dark {
    background: #303134;
}

.ico-end {
    width: 67px;
    height: 25px;
}

.ico-video {
    width: 56px;
    height: 54px;
}

.ico-ctl-mic {
    width: 54px;
    height: 54px;
}

.ico-hand {
    width: 57px;
    height: 66px;
}

.ctl-more {
    flex-direction: column;
    gap: 5px;
}

.ctl-more i {
    width: 12px;
    height: 12px;
    border-radius: 50%;
    background: #fff;
}
```
